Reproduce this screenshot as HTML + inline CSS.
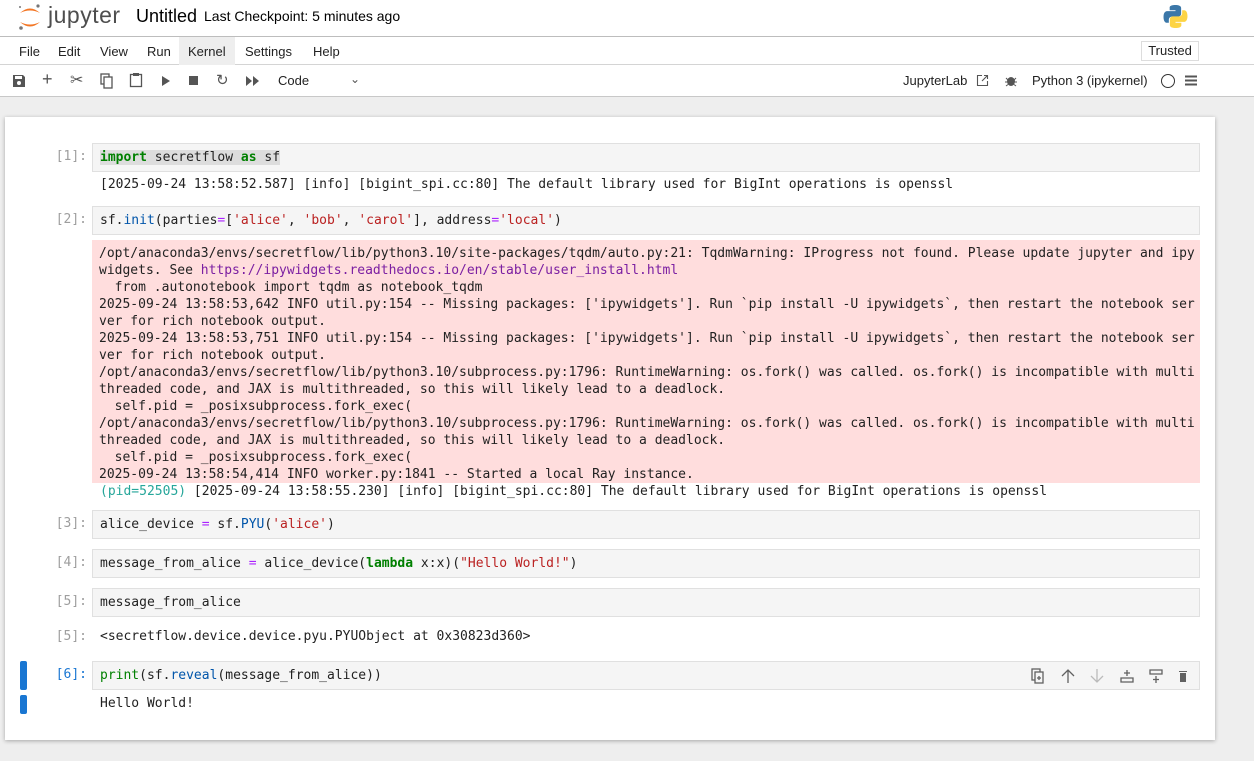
<!DOCTYPE html>
<html><head><meta charset="utf-8"><style>
*{margin:0;padding:0;box-sizing:border-box}
body{width:1254px;height:761px;overflow:hidden;background:#eeeeee;font-family:"Liberation Sans",Helvetica,Arial,sans-serif;color:#222;position:relative}
.top{position:absolute;left:0;top:0;width:1254px;height:37px;background:#fff;border-bottom:1px solid #bdbdbd}
.menu{position:absolute;left:0;top:37px;width:1254px;height:28px;background:#fff;border-bottom:1px solid #d4d4d4;font-size:13px}
.menu span{position:absolute;top:7px}
.tool{position:absolute;left:0;top:65px;width:1254px;height:32px;background:#fff;border-bottom:1px solid #c8c8c8;font-size:13px}
.nb{position:absolute;left:5px;top:117px;width:1210px;height:623px;background:#fff;box-shadow:0 1px 4px rgba(0,0,0,.3)}
.code{position:absolute;left:92px;width:1108px;height:29px;background:#f5f5f5;border:1px solid #e0e0e0}
.mono{font-family:"DejaVu Sans Mono","Liberation Mono",monospace;font-size:13px;white-space:pre}
.code .mono{position:absolute;left:7px;top:6px}
.p{position:absolute;left:35px;width:52px;text-align:right;color:#9e9e9e}
.out{position:absolute;left:100px}
.err{position:absolute;left:92px;top:240px;width:1108px;height:243px;background:#fdd;padding:5px 7px;line-height:17px}
.k{color:#008000;font-weight:bold}.s{color:#ba2121}.f{color:#0055aa}.o{color:#aa22ff}
.bar{position:absolute;left:20px;width:7px;background:#1976d2;border-radius:2px}
</style></head><body>
<div class="top">
<svg style="position:absolute;left:17px;top:2px" width="26" height="30" viewBox="0 0 26 30"><path d="M3 11 Q13 2 23 11 Q13 6 3 11Z" fill="#f37726"/><path d="M3 20 Q13 29 23 20 Q13 25 3 20Z" fill="#f37726"/><circle cx="21" cy="4" r="1.6" fill="#767677"/><circle cx="4" cy="26" r="1.8" fill="#767677"/><circle cx="3" cy="5" r="1" fill="#767677"/></svg>
<span style="position:absolute;left:48px;top:2px;font-size:23px;color:#4e4e4e;letter-spacing:0.5px">jupyter</span>
<span style="position:absolute;left:136px;top:6px;font-size:18px;color:#000">Untitled</span>
<span style="position:absolute;left:204px;top:8px;font-size:14px;color:#000">Last Checkpoint: 5 minutes ago</span>
<svg style="position:absolute;left:1163px;top:4px" width="25" height="25" viewBox="0 0 24 24"><path d="M11.8 1C6 1 6.4 3.5 6.4 3.5V6h5.6v.8H4.2S.5 6.4.5 12.3s3.2 5.7 3.2 5.7h1.9v-2.7s-.1-3.2 3.2-3.2h5.5s3.1.1 3.1-3V3.9S17.9 1 11.8 1z" fill="#3b77a8"/><path d="M12.2 23c5.8 0 5.4-2.5 5.4-2.5V18H12v-.8h7.8s3.7.4 3.7-5.5-3.2-5.7-3.2-5.7h-1.9v2.7s.1 3.2-3.2 3.2H9.7s-3.1-.1-3.1 3v5.2S6.1 23 12.2 23z" fill="#fdd444"/></svg>
</div>
<div class="menu">
<span style="left:19px">File</span><span style="left:58px">Edit</span><span style="left:100px">View</span><span style="left:147px">Run</span>
<div style="position:absolute;left:179px;top:0;width:56px;height:28px;background:#eee"></div><span style="left:188px">Kernel</span>
<span style="left:245px">Settings</span><span style="left:313px">Help</span>
<div style="position:absolute;left:1141px;top:4px;width:58px;height:20px;border:1px solid #ddd;font-size:13px;text-align:center;line-height:18px">Trusted</div>
</div>
<div class="tool">
<svg style="position:absolute;left:12px;top:9px" width="14" height="14" viewBox="0 0 14 14"><path d="M1 1h10l2 2v10H1z" fill="#555"/><rect x="3" y="2" width="7" height="3" fill="#fff"/><circle cx="7" cy="9" r="2" fill="#fff"/></svg>
<span style="position:absolute;left:42px;top:4px;font-size:18px;color:#555">+</span>
<span style="position:absolute;left:70px;top:5px;font-size:16px;color:#555">✂</span>
<svg style="position:absolute;left:100px;top:8px" width="14" height="16" viewBox="0 0 14 16"><rect x="1" y="1" width="8" height="10" fill="none" stroke="#555" stroke-width="1.3"/><rect x="4" y="4" width="8" height="11" fill="#fff" stroke="#555" stroke-width="1.3"/></svg>
<svg style="position:absolute;left:129px;top:7px" width="14" height="16" viewBox="0 0 14 16"><rect x="1.5" y="2.5" width="11" height="12" fill="none" stroke="#555" stroke-width="1.3"/><rect x="4" y="1" width="6" height="3" fill="#555"/></svg>
<svg style="position:absolute;left:161px;top:11px" width="10" height="10"><path d="M1 0l8 5-8 5z" fill="#555"/></svg>
<div style="position:absolute;left:189px;top:11px;width:9px;height:9px;background:#555"></div>
<span style="position:absolute;left:216px;top:6px;font-size:15px;color:#555">↻</span>
<svg style="position:absolute;left:246px;top:11px" width="14" height="10"><path d="M0 0l6 5-6 5zM7 0l6 5-6 5z" fill="#555"/></svg>
<span style="position:absolute;left:278px;top:8px">Code</span>
<span style="position:absolute;left:350px;top:7px;color:#555;font-size:12px">⌄</span>
<span style="position:absolute;left:903px;top:8px">JupyterLab</span>
<svg style="position:absolute;left:976px;top:9px" width="13" height="13"><path d="M6 1.5H1.5v10h10V7M8 1.5h3.5V5M11.5 1.5L6 7" fill="none" stroke="#555" stroke-width="1.1"/></svg>
<svg style="position:absolute;left:1005px;top:9px" width="12" height="13"><ellipse cx="6" cy="7.5" rx="4" ry="4.5" fill="#555"/><path d="M1 4l2 2M11 4l-2 2M0 8h2M10 8h2M1 12l2-1.5M11 12l-2-1.5" stroke="#555"/></svg>
<span style="position:absolute;left:1032px;top:8px">Python 3 (ipykernel)</span>
<div style="position:absolute;left:1161px;top:9px;width:14px;height:14px;border:1.3px solid #333;border-radius:50%"></div>
<svg style="position:absolute;left:1185px;top:10px" width="12" height="11"><path d="M0 1.5h12M0 5.5h12M0 9.5h12" stroke="#555" stroke-width="2"/></svg>
</div>
<div class="nb"></div>
<div class="mono p" style="top:149px">[1]:</div>
<div class="code" style="top:143px"><div class="mono" style="background:#ddd"><span class="k">import</span> secretflow <span class="k">as</span> sf</div></div>
<div class="mono out" style="top:177px">[2025-09-24 13:58:52.587] [info] [bigint_spi.cc:80] The default library used for BigInt operations is openssl</div>
<div class="mono p" style="top:212px">[2]:</div>
<div class="code" style="top:206px"><div class="mono">sf.<span class="f">init</span>(parties<span class="o">=</span>[<span class="s">'alice'</span>, <span class="s">'bob'</span>, <span class="s">'carol'</span>], address<span class="o">=</span><span class="s">'local'</span>)</div></div>
<div class="err mono">/opt/anaconda3/envs/secretflow/lib/python3.10/site-packages/tqdm/auto.py:21: TqdmWarning: IProgress not found. Please update jupyter and ipy
widgets. See <span style="color:#7b1fa2">https://ipywidgets.readthedocs.io/en/stable/user_install.html</span>
  from .autonotebook import tqdm as notebook_tqdm
2025-09-24 13:58:53,642 INFO util.py:154 -- Missing packages: ['ipywidgets']. Run `pip install -U ipywidgets`, then restart the notebook ser
ver for rich notebook output.
2025-09-24 13:58:53,751 INFO util.py:154 -- Missing packages: ['ipywidgets']. Run `pip install -U ipywidgets`, then restart the notebook ser
ver for rich notebook output.
/opt/anaconda3/envs/secretflow/lib/python3.10/subprocess.py:1796: RuntimeWarning: os.fork() was called. os.fork() is incompatible with multi
threaded code, and JAX is multithreaded, so this will likely lead to a deadlock.
  self.pid = _posixsubprocess.fork_exec(
/opt/anaconda3/envs/secretflow/lib/python3.10/subprocess.py:1796: RuntimeWarning: os.fork() was called. os.fork() is incompatible with multi
threaded code, and JAX is multithreaded, so this will likely lead to a deadlock.
  self.pid = _posixsubprocess.fork_exec(
2025-09-24 13:58:54,414 INFO worker.py:1841 -- Started a local Ray instance.</div>
<div class="mono out" style="top:484px"><span style="color:#26a69a">(pid=52505)</span> [2025-09-24 13:58:55.230] [info] [bigint_spi.cc:80] The default library used for BigInt operations is openssl</div>
<div class="mono p" style="top:516px">[3]:</div>
<div class="code" style="top:510px"><div class="mono">alice_device <span class="o">=</span> sf.<span class="f">PYU</span>(<span class="s">'alice'</span>)</div></div>
<div class="mono p" style="top:555px">[4]:</div>
<div class="code" style="top:549px"><div class="mono">message_from_alice <span class="o">=</span> alice_device(<span class="k">lambda</span> x:x)(<span class="s">"Hello World!"</span>)</div></div>
<div class="mono p" style="top:594px">[5]:</div>
<div class="code" style="top:588px"><div class="mono">message_from_alice</div></div>
<div class="mono p" style="top:629px">[5]:</div>
<div class="mono out" style="top:629px">&lt;secretflow.device.device.pyu.PYUObject at 0x30823d360&gt;</div>
<div class="bar" style="top:661px;height:29px"></div>
<div class="bar" style="top:695px;height:19px"></div>
<div class="mono p" style="top:667px;color:#1976d2">[6]:</div>
<div class="code" style="top:661px"><div class="mono"><span style="color:#008000">print</span>(sf.<span class="f">reveal</span>(message_from_alice))</div>
<svg style="position:absolute;left:938px;top:6px" width="160" height="16" viewBox="0 0 160 16">
<g fill="none" stroke="#616161" stroke-width="1.3"><rect x="1" y="1" width="8" height="11"/><rect x="4" y="4" width="8" height="11" fill="#f5f5f5"/><path d="M8 8v4M6 10h4"/>
<path d="M37 15V2M31 8l6-6 6 6"/>
<path d="M66 1v13M60 8l6 6 6-6" stroke="#bbb"/>
<path d="M90 10h12v4H90zM96 2v6M93 5h6"/>
<path d="M119 2h12v4h-12zM125 8v7M122 11.5h6"/></g>
<path d="M148 3h8v1h-8zM149 5h6v9h-6z" fill="#616161"/></svg>
</div>
<div class="mono out" style="top:696px">Hello World!</div>
</body></html>
